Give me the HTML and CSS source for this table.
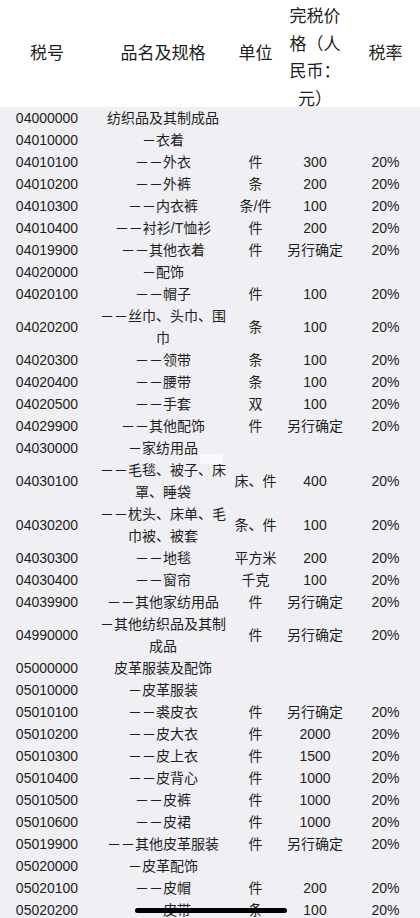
FILE: index.html
```html
<!DOCTYPE html>
<html lang="zh-CN">
<head>
<meta charset="utf-8">
<title>税率表</title>
<link rel="stylesheet" href="styles.css">
</head>
<body>
<div class="page">
  <div class="head">
    <div class="hc">税号</div>
    <div class="hc">品名及规格</div>
    <div class="hc">单位</div>
    <div class="hc price">完税价格（人民币：元）</div>
    <div class="hc">税率</div>
  </div>
  <div class="body">
    <div class="row"><div>04000000</div><div class="name">纺织品及其制成品</div><div></div><div></div><div></div></div>
    <div class="row"><div>04010000</div><div class="name">－衣着</div><div></div><div></div><div></div></div>
    <div class="row"><div>04010100</div><div class="name">－－外衣</div><div>件</div><div>300</div><div>20%</div></div>
    <div class="row"><div>04010200</div><div class="name">－－外裤</div><div>条</div><div>200</div><div>20%</div></div>
    <div class="row"><div>04010300</div><div class="name">－－内衣裤</div><div>条/件</div><div>100</div><div>20%</div></div>
    <div class="row"><div>04010400</div><div class="name">－－衬衫/T恤衫</div><div>件</div><div>200</div><div>20%</div></div>
    <div class="row"><div>04019900</div><div class="name">－－其他衣着</div><div>件</div><div>另行确定</div><div>20%</div></div>
    <div class="row"><div>04020000</div><div class="name">－配饰</div><div></div><div></div><div></div></div>
    <div class="row"><div>04020100</div><div class="name">－－帽子</div><div>件</div><div>100</div><div>20%</div></div>
    <div class="row"><div>04020200</div><div class="name">－－丝巾、头巾、围巾</div><div>条</div><div>100</div><div>20%</div></div>
    <div class="row"><div>04020300</div><div class="name">－－领带</div><div>条</div><div>100</div><div>20%</div></div>
    <div class="row"><div>04020400</div><div class="name">－－腰带</div><div>条</div><div>100</div><div>20%</div></div>
    <div class="row"><div>04020500</div><div class="name">－－手套</div><div>双</div><div>100</div><div>20%</div></div>
    <div class="row"><div>04029900</div><div class="name">－－其他配饰</div><div>件</div><div>另行确定</div><div>20%</div></div>
    <div class="row"><div>04030000</div><div class="name">－家纺用品</div><div></div><div></div><div></div></div>
    <div class="row"><div>04030100</div><div class="name">－－毛毯、被子、床罩、睡袋</div><div>床、件</div><div>400</div><div>20%</div><span class="patch"></span></div>
    <div class="row"><div>04030200</div><div class="name">－－枕头、床单、毛巾被、被套</div><div>条、件</div><div>100</div><div>20%</div></div>
    <div class="row"><div>04030300</div><div class="name">－－地毯</div><div>平方米</div><div>200</div><div>20%</div></div>
    <div class="row"><div>04030400</div><div class="name">－－窗帘</div><div>千克</div><div>100</div><div>20%</div></div>
    <div class="row"><div>04039900</div><div class="name">－－其他家纺用品</div><div>件</div><div>另行确定</div><div>20%</div></div>
    <div class="row"><div>04990000</div><div class="name">－其他纺织品及其制成品</div><div>件</div><div>另行确定</div><div>20%</div></div>
    <div class="row"><div>05000000</div><div class="name">皮革服装及配饰</div><div></div><div></div><div></div></div>
    <div class="row"><div>05010000</div><div class="name">－皮革服装</div><div></div><div></div><div></div></div>
    <div class="row"><div>05010100</div><div class="name">－－裘皮衣</div><div>件</div><div>另行确定</div><div>20%</div></div>
    <div class="row"><div>05010200</div><div class="name">－－皮大衣</div><div>件</div><div>2000</div><div>20%</div></div>
    <div class="row"><div>05010300</div><div class="name">－－皮上衣</div><div>件</div><div>1500</div><div>20%</div></div>
    <div class="row"><div>05010400</div><div class="name">－－皮背心</div><div>件</div><div>1000</div><div>20%</div></div>
    <div class="row"><div>05010500</div><div class="name">－－皮裤</div><div>件</div><div>1000</div><div>20%</div></div>
    <div class="row"><div>05010600</div><div class="name">－－皮裙</div><div>件</div><div>1000</div><div>20%</div></div>
    <div class="row"><div>05019900</div><div class="name">－－其他皮革服装</div><div>件</div><div>另行确定</div><div>20%</div></div>
    <div class="row"><div>05020000</div><div class="name">－皮革配饰</div><div></div><div></div><div></div></div>
    <div class="row"><div>05020100</div><div class="name">－－皮帽</div><div>件</div><div>200</div><div>20%</div></div>
    <div class="row"><div>05020200</div><div class="name">－－皮带</div><div>条</div><div>100</div><div>20%</div></div>
  </div>
</div>
<div class="home-indicator"></div>
</body>
</html>
```
FILE: styles.css
```css
html, body {
  margin: 0;
  padding: 0;
  background: #efeff4;
  overflow: hidden;
}
body {
  font-family: "Liberation Sans", "Noto Sans CJK SC", sans-serif;
  color: #1e1e20;
}
.page {
  width: 420px;
}
.head {
  display: grid;
  grid-template-columns: 94px 138px 47px 72px 69px;
  height: 108px;
  background: #ffffff;
  align-items: center;
  font-size: 17px;
  line-height: 27.5px;
  text-align: center;
}
.hc.price {
  align-self: start;
  padding: 3px 4px 0;
  height: 108px;
  box-sizing: border-box;
}
.body {
  background: #efeff4;
  font-size: 14px;
  line-height: 22px;
  margin-top: -1px;
}
.row {
  position: relative;
  display: grid;
  grid-template-columns: 94px 138px 47px 72px 69px;
  align-items: center;
  min-height: 22px;
  text-align: center;
}
.name {
  padding: 0 4px;
}
.patch {
  position: absolute;
  left: 200px;
  top: -5px;
  width: 23px;
  height: 10px;
  background: #fafafc;
}
.home-indicator {
  position: fixed;
  left: 135px;
  bottom: 5px;
  width: 152px;
  height: 5px;
  border-radius: 3px;
  background: #000000;
}
```
